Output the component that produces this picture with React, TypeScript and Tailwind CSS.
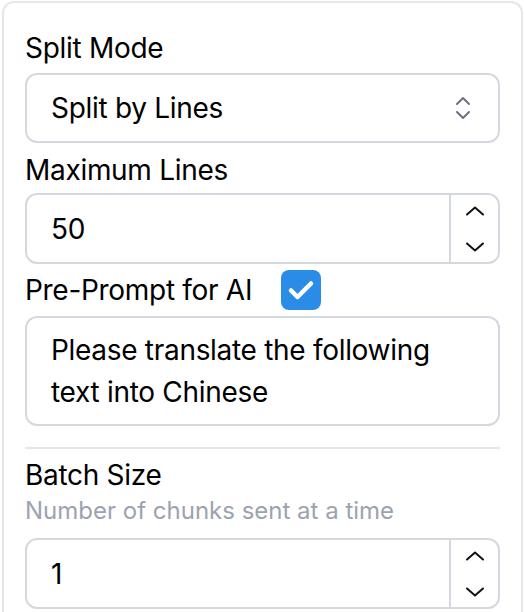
import React, { useState } from 'react';

const font = { fontFamily: 'Inter, "Noto Sans", sans-serif' };

const SpinnerButtons: React.FC = () => (
  <div className="flex w-[49px] flex-col items-center justify-between border-l-2 border-[#d4d8df] pb-[10px] pt-[11px]">
    <svg width="20" height="10" viewBox="0 0 20 10" fill="none" stroke="#111" strokeWidth="2" strokeLinecap="round" strokeLinejoin="round">
      <path d="M2 8.5 L10 1.5 L18 8.5" />
    </svg>
    <svg width="20" height="10" viewBox="0 0 20 10" fill="none" stroke="#111" strokeWidth="2" strokeLinecap="round" strokeLinejoin="round">
      <path d="M2 1.5 L10 8.5 L18 1.5" />
    </svg>
  </div>
);

const NumberField: React.FC<{ value: number }> = ({ value }) => (
  <div className="flex h-[71px] rounded-[12px] border-2 border-[#d4d8df] bg-white">
    <div className="flex flex-1 items-center pl-[24px] text-[28px] leading-[40px] tracking-[-0.3px] text-black">{value}</div>
    <SpinnerButtons />
  </div>
);

const App: React.FC = () => {
  const [usePrompt, setUsePrompt] = useState(true);

  return (
    <div className="min-h-[612px] bg-white pl-[2px] pr-[1px] pt-[1px]" style={font}>
      <div className="min-h-[640px] rounded-t-[12px] border-2 border-b-0 border-[#e5e7eb] px-[21px] pt-[25px]">
        <label className="block text-[28px] leading-[40px] tracking-[-0.3px] text-black">Split Mode</label>
        <div className="mt-[5px] flex h-[70px] items-center justify-between rounded-[12px] border-2 border-[#d4d8df] bg-white pl-[24px] pr-[26px]">
          <span className="text-[28px] leading-[40px] tracking-[-0.3px] text-black">Split by Lines</span>
          <svg width="18" height="24" viewBox="0 0 18 24" fill="none" stroke="#6b7280" strokeWidth="2" strokeLinecap="round" strokeLinejoin="round">
            <path d="M3 8 L9 2 L15 8" />
            <path d="M3 16 L9 22 L15 16" />
          </svg>
        </div>

        <label className="mt-[7px] block text-[28px] leading-[40px] tracking-[-0.3px] text-black">Maximum Lines</label>
        <div className="mt-[3px]">
          <NumberField value={50} />
        </div>

        <div className="mt-[6px] flex items-center gap-[29px]">
          <label className="text-[28px] leading-[40px] tracking-[-0.3px] text-black">Pre-Prompt for AI</label>
          <button
            onClick={() => setUsePrompt(!usePrompt)}
            className="flex h-[40px] w-[40px] items-center justify-center rounded-[8px] bg-[#2b8ce8]"
          >
            {usePrompt && (
              <svg width="40" height="40" viewBox="0 0 40 40" fill="none" stroke="white" strokeWidth="4.5" strokeLinecap="round" strokeLinejoin="round">
                <path d="M10 20.5 L16.5 27 L30 13.5" />
              </svg>
            )}
          </button>
        </div>
        <div className="mt-[6px] h-[110px] rounded-[12px] border-2 border-[#d4d8df] bg-white px-[24px] py-[11px] text-[28px] leading-[42px] tracking-[-0.3px] text-black">
          Please translate the following text into Chinese
        </div>

        <div className="mt-[21px] h-[2px] bg-[#e3e6ea]" />

        <label className="mt-[6px] block text-[28px] leading-[40px] tracking-[-0.3px] text-black">Batch Size</label>
        <p className="text-[24px] leading-[32px] text-[#9ca3af]">Number of chunks sent at a time</p>
        <div className="mt-[11px]">
          <NumberField value={1} />
        </div>
      </div>
    </div>
  );
};

export default App;
